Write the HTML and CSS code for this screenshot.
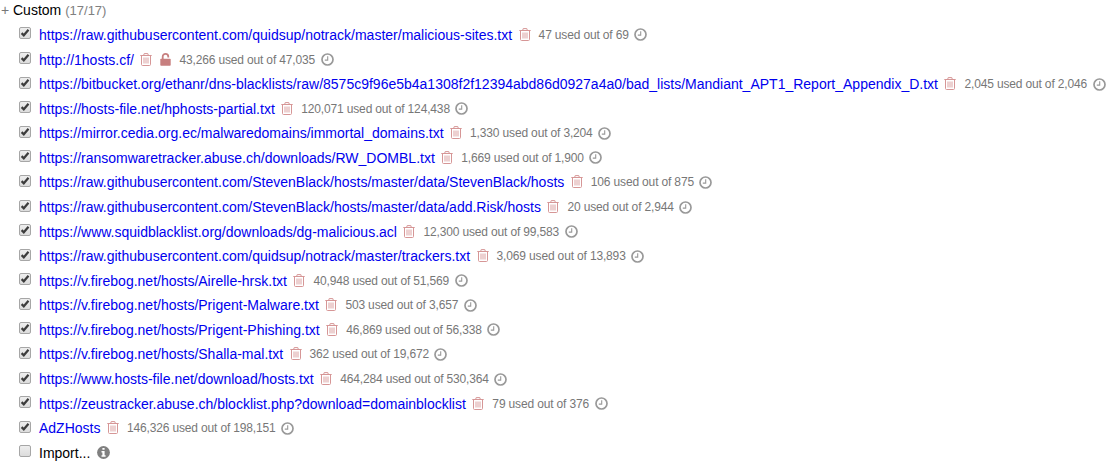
FILE: index.html
```html
<!DOCTYPE html>
<html lang="en">
<head>
<meta charset="utf-8">
<title>Filter lists</title>
<link rel="stylesheet" href="styles.css">
</head>
<body>
<svg class="defs" width="0" height="0">
  <symbol id="trash" viewBox="0 0 12 13"><path fill="none" stroke="currentColor" d="M.3 2.5H11.7M3.7 2.3L4.2 .6H7.8L8.3 2.3M1.5 2.5V11.4Q1.5 12.5 2.5 12.5H9.5Q10.5 12.5 10.5 11.4V2.5"/><path fill="none" stroke="currentColor" stroke-width=".9" d="M4 4.5V10.5M6 4.5V10.5M8 4.5V10.5"/></symbol>
  <symbol id="unlock" viewBox="0 0 11 13"><path fill="none" stroke="currentColor" stroke-width="1.8" d="M2.7 6.5V3.7A2.8 2.8 0 0 1 8.3 3.7V4.5"/><rect x=".3" y="5.7" width="10.4" height="7" rx=".8" fill="currentColor"/></symbol>
  <symbol id="clock" viewBox="0 0 13 13"><circle cx="6.5" cy="6.5" r="5.5" fill="none" stroke="currentColor" stroke-width="1.7"/><path fill="none" stroke="currentColor" stroke-width="1.1" d="M6.7 3.2V7.1H3.8"/></symbol>
  <symbol id="info" viewBox="0 0 13 13"><circle cx="6.5" cy="6.5" r="6.4" fill="currentColor"/><path fill="#fff" d="M5.4 2h2.2v1.8H5.4zM4.5 5.1h3.1v4.2h1v1.5H4.5V9.3h.9V6.5h-.9z"/></symbol>
  <symbol id="check" viewBox="0 0 12 12"><path fill="none" stroke="#3c3c3c" stroke-width="2.2" d="M2.6 6.1L4.8 8.3L9.5 2.8"/></symbol>
</svg>
<div class="group"><span class="plus">+</span><span class="name">Custom</span><span class="total">(17/17)</span></div>
<ul class="lists" id="lists"></ul>
<script src="lists.js"></script>
</body>
</html>
```
FILE: styles.css
```css
body {
  margin: 0;
  height: 475px;
  overflow: hidden;
  background: #fff;
  color: #000;
  font: 14px/20px "Liberation Sans", Arial, sans-serif;
  white-space: nowrap;
}
.defs { display: block; position: absolute; }
.group { display: flex; align-items: baseline; height: 22.7px; padding-left: 1px; }
.plus { width: 12px; color: #777; }
.total { margin-left: 4px; color: #808080; font-size: 13px; }
.lists { margin: 0; padding: 0 0 0 19px; list-style: none; }
.row { display: flex; align-items: center; height: 24.59px; }
.box {
  box-sizing: border-box;
  flex: none;
  width: 12px;
  height: 12px;
  margin: 0 8px 3px 0;
  border: 1px solid #a6a6a6;
  border-radius: 2px;
  background: linear-gradient(#eee, #dcdcdc);
}
.box svg { display: block; width: 12px; height: 12px; margin: -1px; }
.link { color: #0000ee; text-decoration: none; }
.icon { flex: none; display: block; }
.trash { width: 12px; height: 13px; margin: 0 0 1px 6.5px; color: #d69696; }
.unlock { width: 11px; height: 13px; margin: 0 0 1px 8px; color: #c77f7f; }
.stats { margin: 0 0 0 8px; color: #777; font-size: 12px; letter-spacing: -.155px; }
.clock { width: 13px; height: 13px; margin-left: 5.5px; color: #999; }
.info { width: 13px; height: 13px; margin-left: 7px; color: #808080; }
```
FILE: lists.js
```javascript
const lists = [
  ["https://raw.githubusercontent.com/quidsup/notrack/master/malicious-sites.txt", "47", "69"],
  ["http://1hosts.cf/", "43,266", "47,035"],
  ["https://bitbucket.org/ethanr/dns-blacklists/raw/8575c9f96e5b4a1308f2f12394abd86d0927a4a0/bad_lists/Mandiant_APT1_Report_Appendix_D.txt", "2,045", "2,046"],
  ["https://hosts-file.net/hphosts-partial.txt", "120,071", "124,438"],
  ["https://mirror.cedia.org.ec/malwaredomains/immortal_domains.txt", "1,330", "3,204"],
  ["https://ransomwaretracker.abuse.ch/downloads/RW_DOMBL.txt", "1,669", "1,900"],
  ["https://raw.githubusercontent.com/StevenBlack/hosts/master/data/StevenBlack/hosts", "106", "875"],
  ["https://raw.githubusercontent.com/StevenBlack/hosts/master/data/add.Risk/hosts", "20", "2,944"],
  ["https://www.squidblacklist.org/downloads/dg-malicious.acl", "12,300", "99,583"],
  ["https://raw.githubusercontent.com/quidsup/notrack/master/trackers.txt", "3,069", "13,893"],
  ["https://v.firebog.net/hosts/Airelle-hrsk.txt", "40,948", "51,569"],
  ["https://v.firebog.net/hosts/Prigent-Malware.txt", "503", "3,657"],
  ["https://v.firebog.net/hosts/Prigent-Phishing.txt", "46,869", "56,338"],
  ["https://v.firebog.net/hosts/Shalla-mal.txt", "362", "19,672"],
  ["https://www.hosts-file.net/download/hosts.txt", "464,284", "530,364"],
  ["https://zeustracker.abuse.ch/blocklist.php?download=domainblocklist", "79", "376"],
  ["AdZHosts", "146,326", "198,151"]
];
const icon = name => `<svg class="icon ${name}"><use href="#${name}"/></svg>`;
document.getElementById("lists").innerHTML = lists.map(([name, used, total]) =>
  `<li class="row"><span class="box"><svg><use href="#check"/></svg></span><a class="link" href="#">${name}</a>${icon("trash")}${name.startsWith("http:") ? icon("unlock") : ""}<span class="stats">${used} used out of ${total}</span>${icon("clock")}</li>`
).join("") + `<li class="row"><span class="box"></span><span class="name">Import...</span>${icon("info")}</li>`;
```
